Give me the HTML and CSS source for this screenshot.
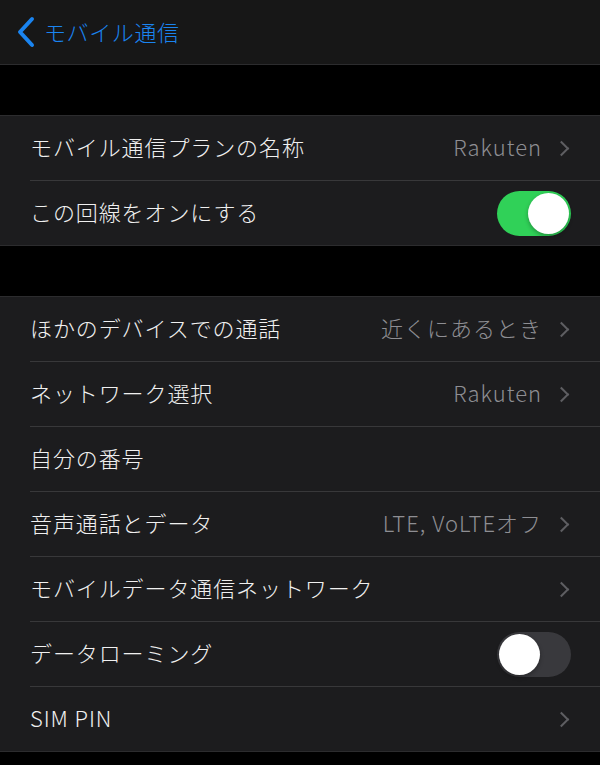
FILE: index.html
```html
<!DOCTYPE html>
<html lang="ja">
<head>
<meta charset="utf-8">
<link rel="stylesheet" href="styles.css">
</head>
<body>
<header class="nav">
  <svg class="back-icon" width="20" height="32" viewBox="0 0 20 32"><path d="M16 3 L4 16 L16 29" fill="none" stroke="#1a84f0" stroke-width="4" stroke-linecap="round" stroke-linejoin="round"/></svg>
  <span class="back-label">モバイル通信</span>
</header>
<div class="gap"></div>
<section class="group">
  <div class="row"><span class="label">モバイル通信プランの名称</span><span class="value">Rakuten</span><span class="chev"></span></div>
  <div class="row"><span class="label">この回線をオンにする</span><span class="toggle on"><span class="knob"></span></span></div>
</section>
<div class="gap"></div>
<section class="group">
  <div class="row"><span class="label">ほかのデバイスでの通話</span><span class="value">近くにあるとき</span><span class="chev"></span></div>
  <div class="row"><span class="label">ネットワーク選択</span><span class="value">Rakuten</span><span class="chev"></span></div>
  <div class="row"><span class="label">自分の番号</span></div>
  <div class="row"><span class="label">音声通話とデータ</span><span class="value">LTE, VoLTEオフ</span><span class="chev"></span></div>
  <div class="row"><span class="label">モバイルデータ通信ネットワーク</span><span class="chev"></span></div>
  <div class="row"><span class="label">データローミング</span><span class="toggle"><span class="knob"></span></span></div>
  <div class="row"><span class="label">SIM PIN</span><span class="chev"></span></div>
</section>
</body>
</html>
```
FILE: styles.css
```css
* { box-sizing: border-box; }
html, body { margin: 0; padding: 0; background: #000; }
body {
  width: 600px;
  height: 765px;
  overflow: hidden;
  font-family: "Noto Sans CJK JP", "Noto Sans", sans-serif;
  color: #f2f2f2;
}
.nav {
  height: 65px;
  background: #171717;
  border-bottom: 1px solid #2c2c2e;
  display: flex;
  align-items: center;
  padding-left: 16px;
}
.back-icon { margin-right: 8px; }
.back-label {
  color: #1a84f0;
  font-size: 22px;
  font-weight: 300;
  line-height: 1;
  letter-spacing: 0.6px;
  padding-bottom: 2px;
}
.gap { height: 50px; }
.group {
  background: #1c1c1e;
  border-top: 1px solid #2c2c2e;
  border-bottom: 1px solid #2c2c2e;
  padding-left: 30px;
}
.row {
  height: 65px;
  display: flex;
  align-items: center;
  padding-right: 29px;
  border-bottom: 1px solid #38383a;
}
.row:last-child { border-bottom: none; height: 64px; }
.label {
  flex: 1;
  font-size: 22px;
  font-weight: 300;
  letter-spacing: 0.9px;
  color: #f0f0f0;
  padding-bottom: 4px;
}
.value {
  font-size: 22px;
  font-weight: 300;
  color: #8e8e93;
  margin-right: 14px;
  letter-spacing: 1px;
  padding-bottom: 4px;
}
.chev {
  width: 11px;
  height: 11px;
  border-top: 2.5px solid #5e5e62;
  border-right: 2.5px solid #5e5e62;
  transform: rotate(45deg);
  margin-right: 4px;
}
.toggle {
  width: 74px;
  height: 45px;
  border-radius: 23px;
  background: #39393d;
  position: relative;
  margin-right: -29px;
  flex: none;
  transform: translateX(-29px);
}
.toggle.on { background: #30d158; }
.knob {
  position: absolute;
  top: 2px;
  left: 2px;
  width: 41px;
  height: 41px;
  border-radius: 50%;
  background: #fff;
  box-shadow: 0 2px 4px rgba(0,0,0,0.3);
}
.toggle.on .knob { left: 31px; }
```
